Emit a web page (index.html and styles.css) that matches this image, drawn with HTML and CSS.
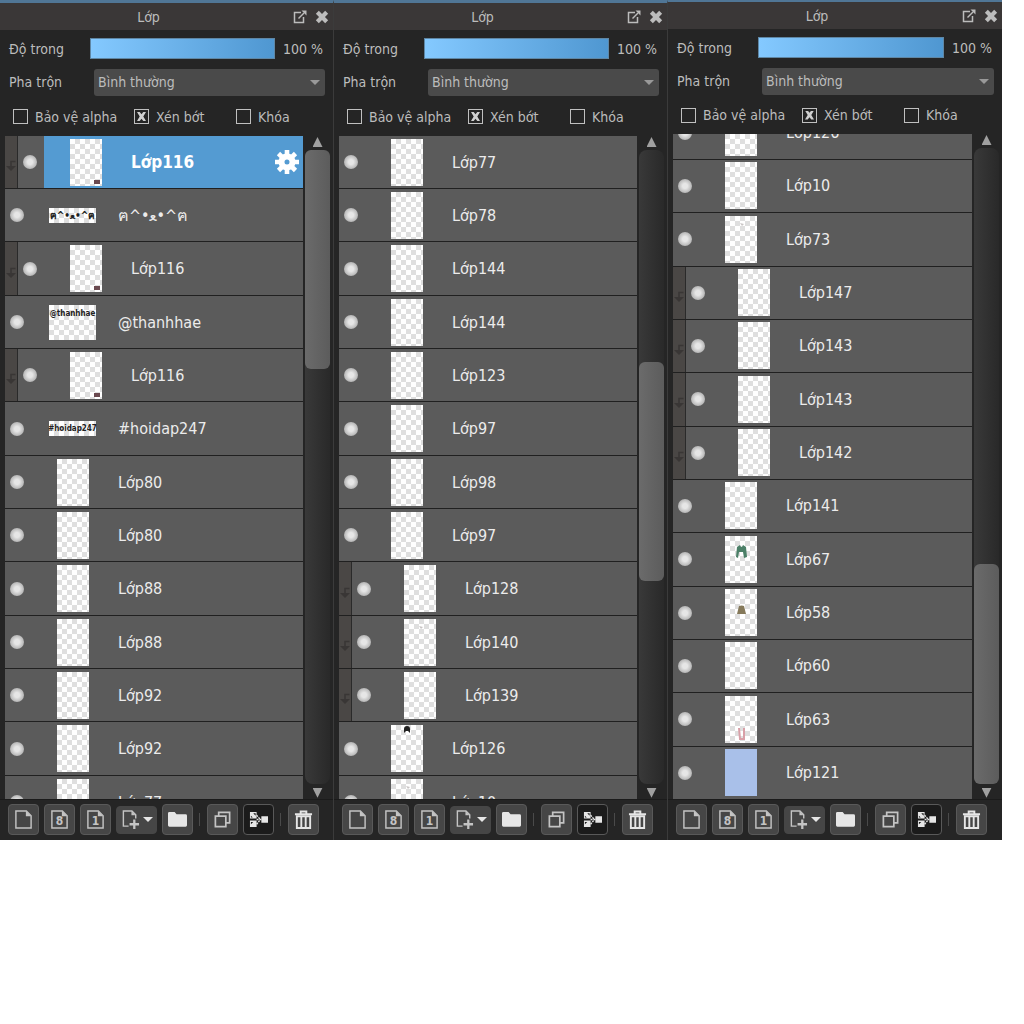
FILE: index.html
```html
<!DOCTYPE html>
<html lang="vi">
<head>
  <meta charset="utf-8">
  <title>Lớp</title>
  <link rel="stylesheet" href="styles.css">
</head>
<body>
  <svg class="symbols" aria-hidden="true">
    <symbol id="popout" viewBox="0 0 14 14">
      <path d="M8 2.5H1.5v10h9V7" fill="none" stroke="currentColor" stroke-width="1.5"/>
      <path d="M5.5 8.5L11 3" stroke="currentColor" stroke-width="1.5"/>
      <path d="M8.5 .5H13.5V5.5z" fill="currentColor"/>
    </symbol>
    <symbol id="close" viewBox="0 0 12 12">
      <path d="M2 2l8 8M10 2l-8 8" stroke="currentColor" stroke-width="3.6"/>
    </symbol>
    <symbol id="page" viewBox="0 0 20 20">
      <path d="M2 1h11l5 5v13H2z" fill="none" stroke="currentColor" stroke-width="1.5"/>
      <path d="M12.5 1v5.5H18z" fill="currentColor"/>
    </symbol>
    <symbol id="page-add" viewBox="0 0 20 20">
      <path d="M8 17H2.5V1h9l4 4v4" fill="none" stroke="currentColor" stroke-width="1.5"/>
      <path d="M11 1v4.5h4.5z" fill="currentColor"/>
      <path d="M14 10v10M9 15h10" stroke="currentColor" stroke-width="2.4"/>
    </symbol>
    <symbol id="folder" viewBox="0 0 20 20">
      <path d="M0 3.5q0-1.5 1.5-1.5h5.5l2 2.5h9.5q1.5 0 1.5 1.5v10q0 1.5-1.5 1.5h-17q-1.5 0-1.5-1.5z" fill="currentColor"/>
    </symbol>
    <symbol id="copy" viewBox="0 0 20 20">
      <path d="M6 6V2.5h11.5v11h-4M2.5 6.5h11v11h-11z" fill="none" stroke="currentColor" stroke-width="1.8"/>
    </symbol>
    <symbol id="merge" viewBox="0 0 20 20">
      <path d="M1 2h7v7H1zM1 11h7v7H1zM13 6.5h7v7h-7z" fill="currentColor"/>
      <path d="M4.500 3.500h2.500v2.500zM2 6v2h2zM4.500 12.500l-2.500 2.500v-2.500z" fill="#1b1b1b"/>
      <path d="M8 5.500l4 4.500M8 10h5M8 15l4-5" fill="none" stroke="currentColor" stroke-width="1.4" stroke-dasharray="2 1"/>
    </symbol>
    <symbol id="trash" viewBox="0 0 20 20">
      <path d="M1 4.5h18M7 4V1.5h6V4" fill="none" stroke="currentColor" stroke-width="2"/>
      <path d="M3 6.5h14V19H3z" fill="none" stroke="currentColor" stroke-width="2"/>
      <path d="M7.7 7v11M12.3 7v11" stroke="currentColor" stroke-width="2"/>
    </symbol>
    <symbol id="gear" viewBox="-12 -12 24 24">
      <circle r="5.5" fill="none" stroke="currentColor" stroke-width="6"/>
      <path d="M0-12V-7M0 12V7M-12 0H-7M12 0H7M-8.5-8.5l4 4M8.5 8.5l-4-4M-8.5 8.5l4-4M8.5-8.5l-4 4" stroke="currentColor" stroke-width="4.6"/>
    </symbol>
    <symbol id="clip-arrow" viewBox="0 0 10 12">
      <path d="M9.5 1.5H5V8" fill="none" stroke="currentColor" stroke-width="1.5"/>
      <path d="M0 6h10l-5 5z" fill="currentColor"/>
    </symbol>

    <!-- thumbnail contents -->
    <symbol id="art-stamp" viewBox="0 0 32 47">
      <path d="M24 41h6v4h-6z" fill="#6b4a50"/>
    </symbol>
    <symbol id="art-hair" viewBox="0 0 32 47">
      <path d="M13 8V4q0-3 3-3t3 3v4l-2-2h-2z" fill="#222"/>
    </symbol>
    <symbol id="art-jacket" viewBox="0 0 32 47">
      <path d="M11 21l1-10 3-2 1 2h1l1-2 3 2 1 10-3 1-1-6h-4l-1 6z" fill="#4c8068"/>
    </symbol>
    <symbol id="art-skirt" viewBox="0 0 32 47">
      <path d="M12 25l2-8q3-1 5 0l2 8z" fill="#85795a"/>
    </symbol>
    <symbol id="art-socks" viewBox="0 0 32 47">
      <path d="M14 32l1 11h2M19 32v11h-2" fill="none" stroke="#d9a0a8" stroke-width="2"/>
    </symbol>
    <symbol id="art-faint" viewBox="0 0 32 47">
      <path d="M15 7l4 1-2 2z" fill="#c9c5c5"/>
    </symbol>
  </svg>

  <main class="panels" id="panels"></main>

  <script src="layers.js"></script>
</body>
</html>
```

FILE: styles.css
```css
* {
  box-sizing: border-box;
}

body {
  margin: 0;
  background: #fff;
  font-family: "DejaVu Sans Condensed", "DejaVu Sans", "Noto Sans", sans-serif;
  font-size: 14px;
  color: #bcbcbc;
}

button, select, input {
  font: inherit;
  color: inherit;
  margin: 0;
}

.symbols {
  display: none;
}

.panels {
  display: grid;
  grid-template-columns: repeat(3, 1fr);
  height: 82vh;
  padding-right: 22px;
}

.panel {
  display: flex;
  flex-direction: column;
  min-width: 0;
  min-height: 0;
  background: #252525;
  border-top: 3px solid #507696;
  border-right: 1px solid #3b3b3b;
}

.panel.at-end {
  border-top-width: 2px;
  border-right: 0;
}

/* title bar */
.titlebar {
  display: grid;
  grid-template-columns: 1fr 40px;
  align-items: center;
  height: 27px;
  background: #3a3737;
}

.titlebar h2 {
  margin: 0;
  padding-left: 4px;
  font-size: 14px;
  font-weight: normal;
  text-align: center;
}

.titlebar-buttons {
  display: flex;
  gap: 8px;
}

.titlebar-buttons button {
  display: flex;
  padding: 0;
  border: 0;
  background: none;
}

.titlebar-buttons svg {
  width: 14px;
  height: 14px;
}

/* opacity, blend mode, flags */
.field {
  display: grid;
  grid-template-columns: 73px 1fr 42px;
  align-items: center;
  column-gap: 8px;
  height: 37px;
  padding: 0 8px 0 9px;
}

.field.blend {
  grid-template-columns: 85px 1fr;
  column-gap: 0;
  height: 30px;
}

.opacity {
  appearance: none;
  width: 100%;
  height: 21px;
  border: 1px solid #5f87a5;
  background: linear-gradient(to right, #84c9ff, #4f97d1);
}

.opacity::-webkit-slider-thumb {
  appearance: none;
  width: 0;
}

.select {
  display: grid;
  align-items: center;
}

.select::after {
  content: "";
  grid-area: 1 / 1;
  justify-self: end;
  margin-right: 5px;
  border: 5px solid transparent;
  border-top-color: #999;
  border-bottom: 0;
  pointer-events: none;
}

.select select {
  grid-area: 1 / 1;
  appearance: none;
  width: 100%;
  height: 27px;
  padding: 0 4px;
  border: 0;
  border-radius: 3px;
  background: #4a4a4a;
}

.flags {
  display: grid;
  grid-template-columns: 121px 102px 1fr;
  align-items: center;
  height: 39px;
  padding-left: 13px;
}

.at-end .flags {
  height: 38px;
}

.flags label {
  display: flex;
  align-items: center;
  gap: 7px;
  white-space: nowrap;
}

.flags input {
  appearance: none;
  display: grid;
  place-items: center;
  flex: none;
  width: 15px;
  height: 15px;
  border: 1px solid #c0c0c0;
}

.flags input:checked::after {
  content: "";
  width: 9px;
  height: 9px;
  background: #d0d0d0;
  clip-path: polygon(0 0, 30% 0, 50% 25%, 70% 0, 100% 0, 70% 50%, 100% 100%, 70% 100%, 50% 75%, 30% 100%, 0 100%, 30% 50%);
}

/* layer list */
.layers {
  display: grid;
  grid-template-columns: 1fr 25px;
  column-gap: 2px;
  flex: 1;
  min-height: 0;
  padding: 0 3px 0 5px;
}

.viewport {
  min-height: 0;
  overflow: hidden;
}

.list {
  display: grid;
  grid-auto-rows: 53px 53px 54px;
  margin: 0;
  padding: 0;
  list-style: none;
}

.at-end .viewport {
  display: flex;
  flex-direction: column;
  justify-content: flex-end;
}

.at-end .list {
  margin-bottom: -1px;
}

.layer {
  display: flex;
  align-items: center;
  border-bottom: 1px solid #202020;
  background: #5b5b5b;
  color: #ececec;
  font-size: 16px;
}

.clip {
  display: flex;
  align-items: center;
  justify-content: center;
  align-self: stretch;
  flex: none;
  width: 13px;
  padding-top: 8px;
  border-right: 1px solid #2a2a2a;
  background: #4a4745;
  color: #393635;
}

.clip svg {
  width: 10px;
  height: 12px;
}

.eye {
  display: flex;
  align-items: center;
  align-self: stretch;
  flex: none;
  width: 26px;
  padding: 0 0 0 5px;
  border: 0;
  background: #5b5b5b;
}

.eye::before {
  content: "";
  width: 14px;
  height: 14px;
  border-radius: 50%;
  background: radial-gradient(#e6e6e6 25%, #b5b5b5 70%);
}

.info {
  display: flex;
  align-items: center;
  align-self: stretch;
  flex: 1;
  gap: 22px;
  min-width: 0;
  padding: 0 4px 0 18px;
}

.thumb-cell {
  display: flex;
  justify-content: center;
  flex: none;
  width: 47px;
}

.thumb {
  width: 32px;
  height: 47px;
  background: repeating-conic-gradient(#dfdfdf 0 25%, #fff 0 50%) 0 0 / 10px 10px;
}

.thumb svg {
  display: block;
  width: 100%;
  height: 100%;
}

.thumb.blue {
  background: #a9c0e9;
}

.thumb.strip, .thumb.wide {
  display: flex;
  justify-content: center;
  width: 47px;
  height: 15px;
  color: #222;
  font-size: 8px;
  font-weight: bold;
  line-height: 15px;
  white-space: nowrap;
}

.thumb.wide {
  height: 35px;
  line-height: 18px;
}

.thumb.face {
  font-size: 10px;
}

.name {
  flex: 1;
  white-space: nowrap;
}

.selected .info {
  background: #549bd2;
  color: #fff;
  font-size: 17px;
  font-weight: bold;
}

.gear {
  display: flex;
  padding: 0;
  border: 0;
  background: none;
}

.gear svg {
  width: 24px;
  height: 24px;
}

/* scrollbar */
.scrollbar {
  display: flex;
  flex-direction: column;
  align-items: center;
  padding: 1px 0;
}

.arrow {
  width: 10px;
  height: 10px;
  margin-bottom: 3px;
  background: #a0a0a0;
  clip-path: polygon(50% 0, 100% 100%, 0 100%);
}

.arrow.down {
  margin: 4px 0 0;
  clip-path: polygon(0 0, 100% 0, 50% 100%);
}

.track {
  display: grid;
  flex: 1;
  width: 25px;
  border-radius: 8px;
  background: linear-gradient(to right, #393939, #292929);
}

.track div {
  grid-row: 2;
  border-radius: 6px;
  background: linear-gradient(to right, #6b6b6b, #5c5c5c);
}

/* toolbar */
.toolbar {
  display: flex;
  align-items: center;
  gap: 5px;
  height: 41px;
  padding-left: 8px;
  border-top: 1px solid #1b1b1b;
}

.toolbar button {
  display: grid;
  place-items: center;
  width: 31px;
  height: 31px;
  padding: 0;
  border: 1px solid #595959;
  border-radius: 4px;
  background: #464646;
  color: #c4c4c4;
}

.toolbar svg {
  grid-area: 1 / 1;
  width: 19px;
  height: 19px;
}

.toolbar .digit {
  grid-area: 1 / 1;
  padding-top: 3px;
  font-size: 12px;
  font-weight: bold;
}

.toolbar .add {
  display: flex;
  align-items: center;
  justify-content: center;
  gap: 3px;
  width: 41px;
  height: 28px;
  border-color: #464646;
}

.toolbar .add::after {
  content: "";
  border: 5px solid transparent;
  border-top-color: #e6e6e6;
  border-bottom: 0;
}

.toolbar .pressed {
  background: #1b1b1b;
}

.toolbar .bright {
  color: #e6e6e6;
}

.divider {
  width: 1px;
  height: 13px;
  margin: 0 2px 0 1px;
  background: #4a4a4a;
}
```

FILE: layers.js
```js
function layer(name, options) {
  return Object.assign({ name: name }, options);
}

// clipped to the layer below
function clipped(name, options) {
  return layer(name, Object.assign({ clip: true }, options));
}

const panels = [
  {
    scroll: 0,
    layers: [
      clipped("Lớp116", { art: "stamp", selected: true }),
      layer("ฅ^•ﻌ•^ฅ", { thumb: "strip face", text: "ฅ^•ﻌ•^ฅ" }),
      clipped("Lớp116", { art: "stamp" }),
      layer("@thanhhae", { thumb: "wide", text: "@thanhhae" }),
      clipped("Lớp116", { art: "stamp" }),
      layer("#hoidap247", { thumb: "strip", text: "#hoidap247" }),
      layer("Lớp80"), layer("Lớp80"), layer("Lớp88"), layer("Lớp88"),
      layer("Lớp92"), layer("Lớp92"), layer("Lớp77")
    ]
  },
  {
    scroll: 212,
    layers: [
      layer("Lớp77"), layer("Lớp78"), layer("Lớp144"), layer("Lớp144"),
      layer("Lớp123"), layer("Lớp97"), layer("Lớp98"), layer("Lớp97"),
      clipped("Lớp128"), clipped("Lớp140", { art: "faint" }), clipped("Lớp139"),
      layer("Lớp126", { art: "hair" }), layer("Lớp10", { art: "faint" })
    ]
  },
  {
    scroll: 415,
    atEnd: true,
    layers: [
      layer("Lớp126"), layer("Lớp10"), layer("Lớp73", { art: "faint" }),
      clipped("Lớp147"), clipped("Lớp143"), clipped("Lớp143"), clipped("Lớp142"),
      layer("Lớp141"), layer("Lớp67", { art: "jacket" }),
      layer("Lớp58", { art: "skirt" }), layer("Lớp60"),
      layer("Lớp63", { art: "socks" }), layer("Lớp121", { thumb: "blue" })
    ]
  }
];

const SCROLL_RANGE = 415;
const SCROLL_THUMB = 219;

function icon(id) {
  return `<svg aria-hidden="true"><use href="#${id}"/></svg>`;
}

function layerRow(item) {
  const content = item.text || (item.art ? icon("art-" + item.art) : "");
  return `
    <li class="layer ${item.selected ? "selected" : ""}">
      ${item.clip ? `<span class="clip">${icon("clip-arrow")}</span>` : ""}
      <button class="eye" type="button" aria-label="Hiện ${item.name}"></button>
      <div class="info">
        <div class="thumb-cell"><div class="thumb ${item.thumb || ""}">${content}</div></div>
        <span class="name">${item.name}</span>
        ${item.selected ? `<button class="gear" type="button" aria-label="Cài đặt">${icon("gear")}</button>` : ""}
      </div>
    </li>`;
}

function panelHtml(panel, n) {
  const rows = `${panel.scroll}fr ${SCROLL_THUMB}fr ${SCROLL_RANGE - panel.scroll}fr`;
  return `
    <section class="panel ${panel.atEnd ? "at-end" : ""}">
      <header class="titlebar">
        <h2>Lớp</h2>
        <div class="titlebar-buttons">
          <button type="button" aria-label="Tách cửa sổ">${icon("popout")}</button>
          <button type="button" aria-label="Đóng">${icon("close")}</button>
        </div>
      </header>
      <div class="field">
        <label for="opacity${n}">Độ trong</label>
        <input class="opacity" id="opacity${n}" type="range" value="100">
        <output for="opacity${n}">100 %</output>
      </div>
      <div class="field blend">
        <label for="blend${n}">Pha trộn</label>
        <div class="select"><select id="blend${n}"><option>Bình thường</option></select></div>
      </div>
      <div class="flags">
        <label><input type="checkbox">Bảo vệ alpha</label>
        <label><input type="checkbox" checked>Xén bớt</label>
        <label><input type="checkbox">Khóa</label>
      </div>
      <div class="layers">
        <div class="viewport"><ul class="list">${panel.layers.map(layerRow).join("")}</ul></div>
        <div class="scrollbar">
          <span class="arrow"></span>
          <div class="track" style="grid-template-rows: ${rows}"><div></div></div>
          <span class="arrow down"></span>
        </div>
      </div>
      <footer class="toolbar">
        <button type="button" aria-label="Lớp mới">${icon("page")}</button>
        <button type="button">${icon("page")}<span class="digit">8</span></button>
        <button type="button">${icon("page")}<span class="digit">1</span></button>
        <button class="add" type="button" aria-label="Thêm lớp">${icon("page-add")}</button>
        <button class="bright" type="button" aria-label="Thư mục">${icon("folder")}</button>
        <span class="divider"></span>
        <button type="button" aria-label="Nhân đôi">${icon("copy")}</button>
        <button class="pressed bright" type="button" aria-label="Gộp lớp">${icon("merge")}</button>
        <span class="divider"></span>
        <button class="bright" type="button" aria-label="Xóa">${icon("trash")}</button>
      </footer>
    </section>`;
}

document.getElementById("panels").innerHTML = panels.map(panelHtml).join("");
```
